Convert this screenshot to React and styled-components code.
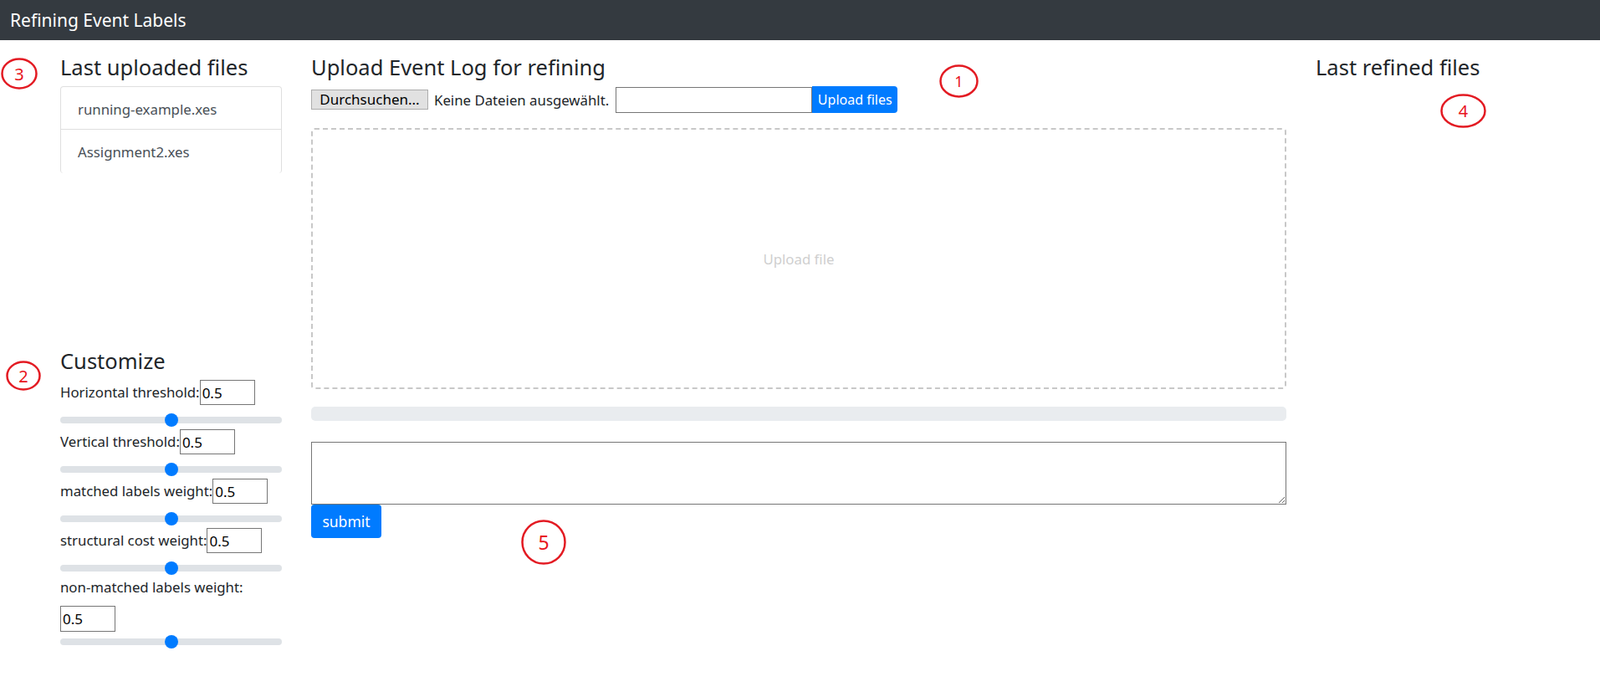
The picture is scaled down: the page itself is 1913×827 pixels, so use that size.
import React from 'react'
import styled, { createGlobalStyle } from 'styled-components'

const GlobalStyle = createGlobalStyle`
    body {
        margin: 0;
        font-family: "Noto Sans", "Open Sans", sans-serif;
        font-size: 16.8px;
        color: #212529;
        background: #fff;
    }
`

const Page = styled.div`
    position: relative;
    min-height: 827px;
`

const Navbar = styled.div`
    display: flex;
    align-items: center;
    height: 48px;
    padding: 0 12px;
    background-color: #343a40;
`

const Brand = styled.span`
    font-size: 21px;
    color: #fff;
`

const Row = styled.div`
    display: grid;
    grid-template-columns: 265px 1166px 1fr;
    column-gap: 35px;
    margin-left: 72px;
    padding-top: 18px;
`

const Col = styled.div`
    min-width: 0;
`

const Heading = styled.h4`
    font-size: 25.5px;
    font-weight: 400;
    line-height: 29px;
    margin: 0 0 8px;
`

const UploadedSection = styled.div`
    height: 351px;
`

const FileList = styled.div`
    height: 103px;
    overflow: hidden;
    border: 1px solid rgba(0,0,0,0.125);
    border-bottom: none;
    border-radius: 4px;
`

const FileItem = styled.div`
    padding: 15px 20px 11px;
    line-height: 24px;
    color: #495057;
    & + & {
        border-top: 1px solid rgba(0,0,0,0.125);
    }
`

const Setting = styled.div`
    display: flex;
    flex-direction: column;
`

const SettingLabel = styled.label`
    display: flex;
    align-items: ${p => (p.$wrap ? 'flex-start' : 'center')};
    flex-direction: ${p => (p.$wrap ? 'column' : 'row')};
    min-height: 30px;
    line-height: 24px;
`

const NumberInput = styled.input`
    box-sizing: border-box;
    width: 66px;
    height: ${p => (p.$wrap ? '31px' : '30px')};
    margin-top: ${p => (p.$wrap ? '10px' : '0')};
    padding: 1px 2px;
    border: 1px solid #767676;
    font-family: inherit;
    font-size: 17px;
    color: #000;
    outline: none;
`

const Range = styled.input`
    -webkit-appearance: none;
    appearance: none;
    display: block;
    width: 100%;
    height: 23px;
    margin: ${p => (p.$wrap ? '0' : '6px')} 0 0;
    padding: 0;
    background: transparent;
    &::-webkit-slider-runnable-track {
        height: 8px;
        border-radius: 16px;
        background-color: #dee2e6;
    }
    &::-webkit-slider-thumb {
        -webkit-appearance: none;
        appearance: none;
        width: 16px;
        height: 16px;
        margin-top: -4px;
        border: 0;
        border-radius: 50%;
        background-color: #007bff;
    }
`

const FileRow = styled.div`
    display: flex;
    align-items: center;
    height: 32px;
    margin-top: 1px;
`

const BrowseButton = styled.button`
    box-sizing: border-box;
    width: 140px;
    height: 24px;
    padding: 0;
    border: 1px solid #adadad;
    background-color: #e1e1e1;
    font-family: inherit;
    font-size: 17px;
    line-height: 20px;
    color: #000;
`

const NoFile = styled.span`
    margin-left: 7px;
    white-space: nowrap;
`

const TextInput = styled.input`
    box-sizing: border-box;
    width: 235px;
    height: 31px;
    margin-left: 8px;
    border: 1px solid #767676;
    outline: none;
`

const BlueButton = styled.button`
    box-sizing: border-box;
    height: ${p => (p.$small ? '32px' : '40px')};
    width: ${p => (p.$small ? '102px' : '84px')};
    padding: 0;
    border: 0;
    border-radius: ${p => (p.$small ? '0 4px 4px 0' : '4px')};
    background-color: #007bff;
    color: #fff;
    font-family: inherit;
    font-size: ${p => (p.$small ? '16px' : '17.5px')};
`

const DropZone = styled.div`
    display: flex;
    align-items: center;
    justify-content: center;
    box-sizing: border-box;
    height: 312px;
    margin-top: 18px;
    border: 2px dashed #c8c8c8;
    border-radius: 4px;
    color: #cfcfcf;
`

const Progress = styled.div`
    height: 17px;
    margin-top: 21px;
    border-radius: 5px;
    background-color: #e9ecef;
`

const TextArea = styled.textarea`
    display: block;
    box-sizing: border-box;
    width: 100%;
    height: 75px;
    margin: 25px 0 0;
    border: 1px solid #767676;
    outline: none;
`

const Marker = styled.div`
    position: absolute;
    left: ${p => p.$x}px;
    top: ${p => p.$y}px;
    width: ${p => p.$w}px;
    height: ${p => p.$h}px;
    display: flex;
    align-items: center;
    justify-content: center;
    color: #e8141c;
    font-size: ${p => p.$fs || 20}px;
    & svg {
        position: absolute;
        inset: 0;
    }
`

const Note = ({ x, y, w, h, fs, children }) => (
    <Marker $x={x} $y={y} $w={w} $h={h} $fs={fs}>
        <svg width={w} height={h}>
            <ellipse cx={w / 2} cy={h / 2} rx={w / 2 - 1.5} ry={h / 2 - 1.5} fill="none" stroke="#e31b23" strokeWidth="2.5" />
        </svg>
        <span>{children}</span>
    </Marker>
)

const settings = [
    { label: 'Horizontal threshold:' },
    { label: 'Vertical threshold:' },
    { label: 'matched labels weight:' },
    { label: 'structural cost weight:' },
    { label: 'non-matched labels weight:', wrap: true },
]

const App = () => {
    return (
        <Page>
            <GlobalStyle />
            <Navbar>
                <Brand>Refining Event Labels</Brand>
            </Navbar>
            <Row>
                <Col>
                    <UploadedSection>
                        <Heading>Last uploaded files</Heading>
                        <FileList>
                            <FileItem>running-example.xes</FileItem>
                            <FileItem>Assignment2.xes</FileItem>
                        </FileList>
                    </UploadedSection>
                    <Heading>Customize</Heading>
                    {settings.map(s => (
                        <Setting key={s.label}>
                            <SettingLabel $wrap={s.wrap}>
                                {s.label}
                                <NumberInput $wrap={s.wrap} defaultValue="0.5" />
                            </SettingLabel>
                            <Range type="range" min="0" max="1" step="0.1" defaultValue="0.5" $wrap={s.wrap} />
                        </Setting>
                    ))}
                </Col>
                <Col>
                    <Heading>Upload Event Log for refining</Heading>
                    <FileRow>
                        <BrowseButton>Durchsuchen...</BrowseButton>
                        <NoFile>Keine Dateien ausgewählt.</NoFile>
                        <TextInput />
                        <BlueButton $small>Upload files</BlueButton>
                    </FileRow>
                    <DropZone>Upload file</DropZone>
                    <Progress />
                    <TextArea />
                    <BlueButton>submit</BlueButton>
                </Col>
                <Col>
                    <Heading>Last refined files</Heading>
                </Col>
            </Row>
            <Note x={1} y={69} w={44} h={38}>3</Note>
            <Note x={7} y={431} w={42} h={36}>2</Note>
            <Note x={1123} y={77} w={47} h={40} fs={18}>1</Note>
            <Note x={1722} y={112} w={55} h={41}>4</Note>
            <Note x={623} y={621} w={54} h={54} fs={23}>5</Note>
        </Page>
    )
}

export default App
